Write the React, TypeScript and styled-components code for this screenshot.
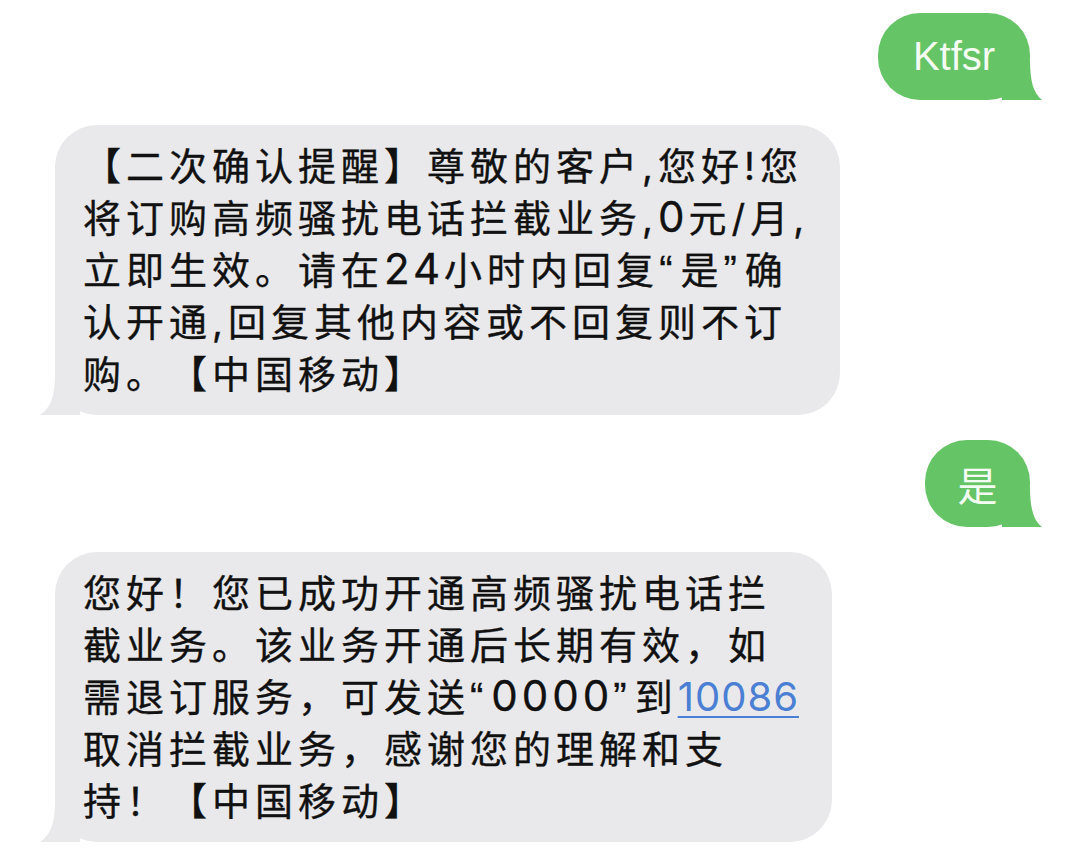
import styled, { createGlobalStyle } from 'styled-components';

const GlobalStyle = createGlobalStyle`
  html, body {
    margin: 0;
    padding: 0;
    background: #ffffff;
  }
  body {
    font-family: 'Noto Sans CJK SC', 'Noto Sans', sans-serif;
  }
`;

const Thread = styled.div`
  display: flex;
  flex-direction: column;
  gap: 25px;
  width: 1080px;
  height: 863px;
  box-sizing: border-box;
  padding: 13px 50px 0 55px;
  overflow: hidden;
`;

type Side = 'me' | 'them';

const Bubble = styled.div<{ $from: Side; $width: number }>`
  position: relative;
  align-self: ${(p) => (p.$from === 'me' ? 'flex-end' : 'flex-start')};
  width: ${(p) => p.$width}px;
  box-sizing: border-box;
  border-radius: 42px;
  background: ${(p) => (p.$from === 'me' ? '#65c466' : '#e9e9eb')};
`;

const ShortText = styled.div`
  height: 87px;
  display: flex;
  align-items: center;
  justify-content: center;
  font-family: 'Liberation Sans', 'Noto Sans CJK SC', sans-serif;
  font-size: 40px;
  color: #f4fbf2;
`;

const LongText = styled.div`
  position: relative;
  padding: 15px 20px 15px 28px;
  font-family: 'Inter', 'Noto Sans CJK SC', sans-serif;
  font-size: 38px;
  font-weight: 400;
  line-height: 52px;
  letter-spacing: 5px;
  color: #111111;
  -webkit-text-stroke: 0.35px #111111;
  white-space: nowrap;
  text-spacing-trim: space-all;
`;

/* digits and quotes in the source are set wider than the CJK run */
const Digits = styled.span`
  font-size: 42px;
  line-height: 1;
  letter-spacing: 4px;
`;

const Quote = styled.span`
  font-family: 'Liberation Sans', sans-serif;
  font-size: 40px;
  line-height: 1;
  letter-spacing: 8px;
`;

const Link = styled.span`
  font-size: 40px;
  line-height: 1;
  letter-spacing: 1px;
  color: #4a7fd3;
  -webkit-text-stroke: 0;
  text-decoration: underline;
  text-decoration-thickness: 2px;
  text-underline-offset: 5px;
`;

const TailSvg = styled.svg<{ $from: Side; $color: string }>`
  position: absolute;
  bottom: 0;
  width: 40px;
  height: 40px;
  ${(p) => (p.$from === 'me' ? 'right: -12px;' : 'left: -15px;')}
  fill: ${(p) => p.$color};
`;

function Tail({ from }: { from: Side }) {
  const color = from === 'me' ? '#65c466' : '#e9e9eb';
  const d =
    from === 'me'
      ? 'M28 0 C28 20 31 33 40 40 L0 40 L0 0 Z'
      : 'M15 0 C15 20 11 33 0 40 L40 40 L40 0 Z';
  return (
    <TailSvg $from={from} $color={color} viewBox="0 0 40 40" aria-hidden>
      <path d={d} />
    </TailSvg>
  );
}

export default function App() {
  return (
    <>
      <GlobalStyle />
      <Thread>
        <Bubble $from="me" $width={152}>
          <Tail from="me" />
          <ShortText>Ktfsr</ShortText>
        </Bubble>

        <Bubble $from="them" $width={785}>
          <Tail from="them" />
          <LongText>
            【二次确认提醒】尊敬的客户,您好!您
            <br />
            将订购高频骚扰电话拦截业务,<Digits>0</Digits>元/月,
            <br />
            立即生效。请在<Digits>24</Digits>小时内回复<Quote>“</Quote>是<Quote>”</Quote>确
            <br />
            认开通,回复其他内容或不回复则不订
            <br />
            购。【中国移动】
          </LongText>
        </Bubble>

        <Bubble $from="me" $width={105}>
          <Tail from="me" />
          <ShortText>是</ShortText>
        </Bubble>

        <Bubble $from="them" $width={777}>
          <Tail from="them" />
          <LongText>
            您好！您已成功开通高频骚扰电话拦
            <br />
            截业务。该业务开通后长期有效，如
            <br />
            需退订服务，可发送<Quote>“</Quote><Digits>0000</Digits><Quote>”</Quote>到<Link>10086</Link>
            <br />
            取消拦截业务，感谢您的理解和支
            <br />
            持！【中国移动】
          </LongText>
        </Bubble>
      </Thread>
    </>
  );
}
